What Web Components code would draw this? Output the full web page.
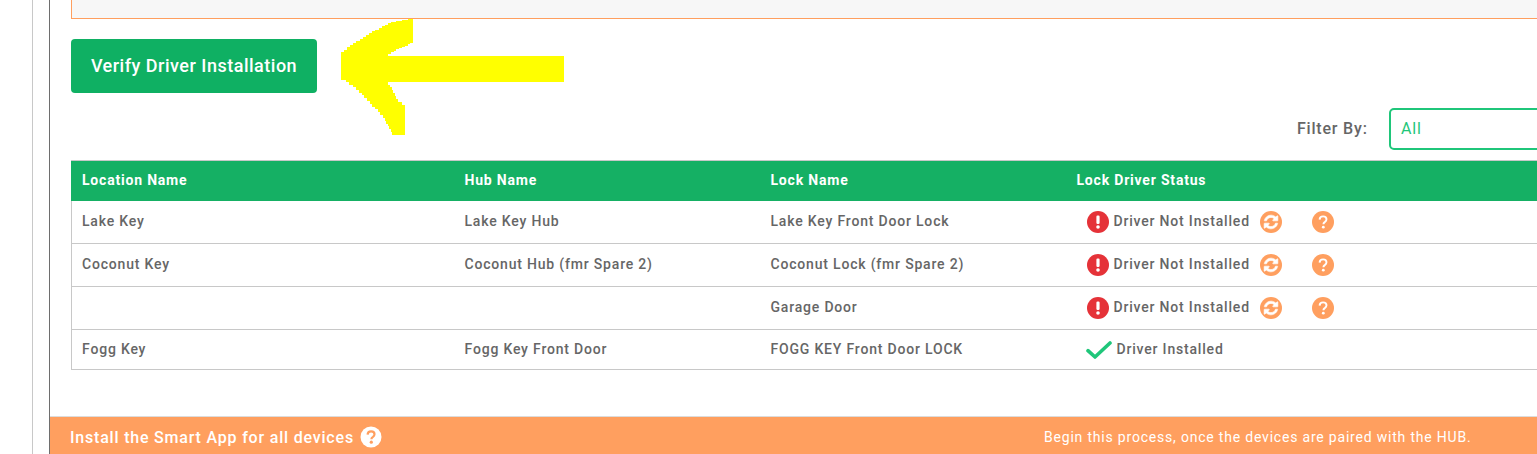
<!DOCTYPE html>
<html lang="en"><head><meta charset="utf-8"><title>Driver verification</title>
<style>
html,body{margin:0;padding:0;height:454px;overflow:hidden;background:#fff}
body{font-family:Roboto,sans-serif;color:#5f5f5f}
</style></head><body>
<driver-page>
  <driver-table>
    <driver-row location="Lake Key" hub="Lake Key Hub" lock="Lake Key Front Door Lock" status="bad"></driver-row>
    <driver-row location="Coconut Key" hub="Coconut Hub (fmr Spare 2)" lock="Coconut Lock (fmr Spare 2)" status="bad"></driver-row>
    <driver-row lock="Garage Door" status="bad"></driver-row>
    <driver-row location="Fogg Key" hub="Fogg Key Front Door" lock="FOGG KEY Front Door LOCK" status="ok"></driver-row>
  </driver-table>
</driver-page>
<script>
const SYNC='M1639 1056q0 5-1 7-64 268-268 434.5t-478 166.5q-146 0-282.5-55t-243.5-157l-129 129q-19 19-45 19t-45-19-19-45v-448q0-26 19-45t45-19h448q26 0 45 19t19 45-19 45l-137 137q71 66 161 102t187 36q134 0 250-65t186-179q11-17 53-117 8-23 30-23h192q13 0 22.5 9.5t9.5 22.5zm25-800v448q0 26-19 45t-45 19h-448q-26 0-45-19t-19-45 19-45l138-138q-148-137-349-137-134 0-250 65t-186 179q-11 17-53 117-8 23-30 23h-199q-13 0-22.5-9.5t-9.5-22.5v-7q65-268 270-434.5t480-166.5q146 0 284 55.5t245 156.5l130-129q19-19 45-19t45 19 19 45z';
const ICONS={
 err:`<svg width="22" height="22" viewBox="0 0 22 22"><circle cx="11" cy="11" r="11" fill="#e53238"/><rect x="9.4" y="4.6" width="3.2" height="8.4" rx="1.2" fill="#fff"/><circle cx="11" cy="16" r="1.8" fill="#fff"/></svg>`,
 sync:`<svg width="22" height="22" viewBox="0 0 22 22"><circle cx="11" cy="11" r="11" fill="#ff9f5f"/><svg x="3" y="3" width="16" height="16" viewBox="0 0 1792 1792"><path fill="#fff" stroke="#fff" stroke-width="70" d="${SYNC}"/></svg></svg>`,
 help:`<svg width="22" height="22" viewBox="0 0 22 22"><circle cx="11" cy="11" r="11" fill="#ff9f5f"/><path d="M7.6 8.6C7.7 6.5 9.1 5.4 11.1 5.4c2 0 3.4 1.2 3.4 2.9 0 1.4-.8 2.1-1.8 2.8-.9.6-1.3 1.1-1.3 2.2" fill="none" stroke="#fff" stroke-width="1.9"/><circle cx="11.3" cy="16.2" r="1.4" fill="#fff"/></svg>`,
 helpW:`<svg width="22" height="22" viewBox="0 0 22 22"><circle cx="11" cy="11" r="10.5" fill="#fff"/><path d="M7.6 8.6C7.7 6.5 9.1 5.4 11.1 5.4c2 0 3.4 1.2 3.4 2.9 0 1.4-.8 2.1-1.8 2.8-.9.6-1.3 1.1-1.3 2.2" fill="none" stroke="#ff9f5f" stroke-width="2.2"/><circle cx="11.3" cy="16.2" r="1.6" fill="#ff9f5f"/></svg>`,
 check:`<svg width="26" height="18" viewBox="0 0 26 18"><path d="M2 9.6 9 16 24 2" fill="none" stroke="#1fc67a" stroke-width="3.6" stroke-linecap="round" stroke-linejoin="round"/></svg>`
};
function arrowPath(){
  const pts=[[73,0],[73,25],[62,30],[48,37],[48,38],[224,38],[224,64],[45,64],[50,69],[58,84],[65,90],[65,117],[54,117],[43,97],[27,80],[16,69],[6,62],[1,61],[1,34],[10,27],[29,15],[48,5],[62,2]];
  let d='M73 0';
  pts.forEach((p,i)=>{
    const q=pts[(i+1)%pts.length];
    const dx=q[0]-p[0],dy=q[1]-p[1];
    if(dx===0||dy===0){d+=`L${q[0]} ${q[1]}`;return}
    const n=Math.max(1,Math.round(Math.max(Math.abs(dx),Math.abs(dy))/3));
    for(let k=1;k<=n;k++){
      const x=Math.round(p[0]+dx*k/n),y=Math.round(p[1]+dy*k/n);
      d+=`H${x}V${y}`;
    }
  });
  return d+'Z';
}
const define=(name,css,html)=>customElements.define(name,class extends HTMLElement{
  constructor(){super();this.attachShadow({mode:'open'})}
  connectedCallback(){this.shadowRoot.innerHTML=`<style>${css}</style>`+(typeof html==='function'?html(this):html)}
});
define('driver-page',`
:host{display:flex;width:1600px;height:454px;position:relative;font-family:Roboto,sans-serif}
.rail{width:32px;flex:none}
.gut{width:16px;flex:none;border-left:1px solid #c8c8c8}
.main{flex:1;border-left:1px solid #6e6e6e;display:flex;flex-direction:column;min-width:0}
.body{flex:none;height:417px;padding:0 0 0 21px;box-sizing:border-box;border-bottom:1px solid #dcdcdc;display:flex;flex-direction:column}
.panel{height:18px;flex:none;background:#f7f7f7;border:1px solid #ff9f5f;border-top:0;box-sizing:content-box}
.btn{align-self:flex-start;margin-top:20px;height:54px;width:246px;box-sizing:border-box;padding:0 0 2px 0;background:#0fb063;color:#fff;border-radius:4px;display:flex;align-items:center;justify-content:center;font-size:18px;font-weight:500;letter-spacing:.5px}
.filter{display:flex;align-items:center;margin-top:15px;height:42px;padding-left:1226px;margin-bottom:10px;letter-spacing:.8px}
.filter label{width:92px;font-size:16px;font-weight:500;color:#666;padding-bottom:2px}
.sel{width:200px;height:42px;box-sizing:border-box;border:2px solid #1fc67a;border-radius:5px;color:#1fc67a;font-size:16px;padding:0 0 2px 10px;display:flex;align-items:center}
.foot{flex:1;background:#ff9f5f;color:#fff;display:flex;padding:10px 0 0 20px;box-sizing:border-box;align-items:flex-start}
.t{font-size:16px;font-weight:500;letter-spacing:.8px;width:288px;display:flex;align-items:center;white-space:nowrap;gap:6px;flex:none}
.t svg{flex:none;margin-top:-1px}
.s{margin-left:686px;font-size:14px;letter-spacing:.8px;white-space:nowrap;margin-top:2px}
.arrow{position:absolute;left:340px;top:18px}
`,()=>`
<div class="rail"></div><div class="gut"></div>
<div class="main">
 <div class="body">
  <div class="panel"></div>
  <div class="btn">Verify Driver Installation</div>
  <div class="filter"><label>Filter By:</label><div class="sel">All</div></div>
  <slot></slot>
 </div>
 <div class="foot"><div class="t">Install the Smart App for all devices ${ICONS.helpW}</div><div class="s">Begin this process, once the devices are paired with the HUB.</div></div>
</div>
<svg class="arrow" width="224" height="118" viewBox="0 0 224 118" shape-rendering="crispEdges"><path fill="#ff0" d="${arrowPath()}"/></svg>`);
define('driver-table',`
:host{display:block;width:1520px;border:1px solid #c8c8c8;box-sizing:border-box}
.h{display:grid;grid-template-columns:382.5px 306px 306px 1fr;height:40px;align-items:center;box-sizing:border-box;padding-bottom:2px;background:#15b064;color:#fff;font-size:14px;font-weight:700;letter-spacing:.8px;margin:0 -1px}
.h span{padding-left:11px;white-space:nowrap}
`,`<div class="h"><span>Location Name</span><span>Hub Name</span><span>Lock Name</span><span>Lock Driver Status</span></div><slot></slot>`);
define('driver-row',`
:host{display:grid;grid-template-columns:382.5px 306px 306px 1fr;height:43px;align-items:center;font-size:14px;font-weight:500;letter-spacing:.81px;color:#666;border-bottom:1px solid #c8c8c8;box-sizing:border-box}
:host(:last-child){border-bottom:0;height:39px}
span.c{padding-left:10px;white-space:nowrap;padding-bottom:2px}
.st{display:flex;align-items:center;padding-left:20.5px}
.st svg{flex:none}
.st .l{margin-left:4.5px;white-space:nowrap;padding-bottom:2px}
.st .a{margin-left:10px;display:flex}.st .b{margin-left:30px;display:flex}
.st.ok{padding-left:19.5px}
.ok .l{margin-left:4.5px}
`,(e)=>{const g=n=>e.getAttribute(n)||'';const bad=g('status')==='bad';return `<span class="c">${g('location')}</span><span class="c">${g('hub')}</span><span class="c">${g('lock')}</span>`+(bad?`<div class="st">${ICONS.err}<span class="l">Driver Not Installed</span><span class="a">${ICONS.sync}</span><span class="b">${ICONS.help}</span></div>`:`<div class="st ok">${ICONS.check}<span class="l">Driver Installed</span></div>`)});
</script>
</body></html>
